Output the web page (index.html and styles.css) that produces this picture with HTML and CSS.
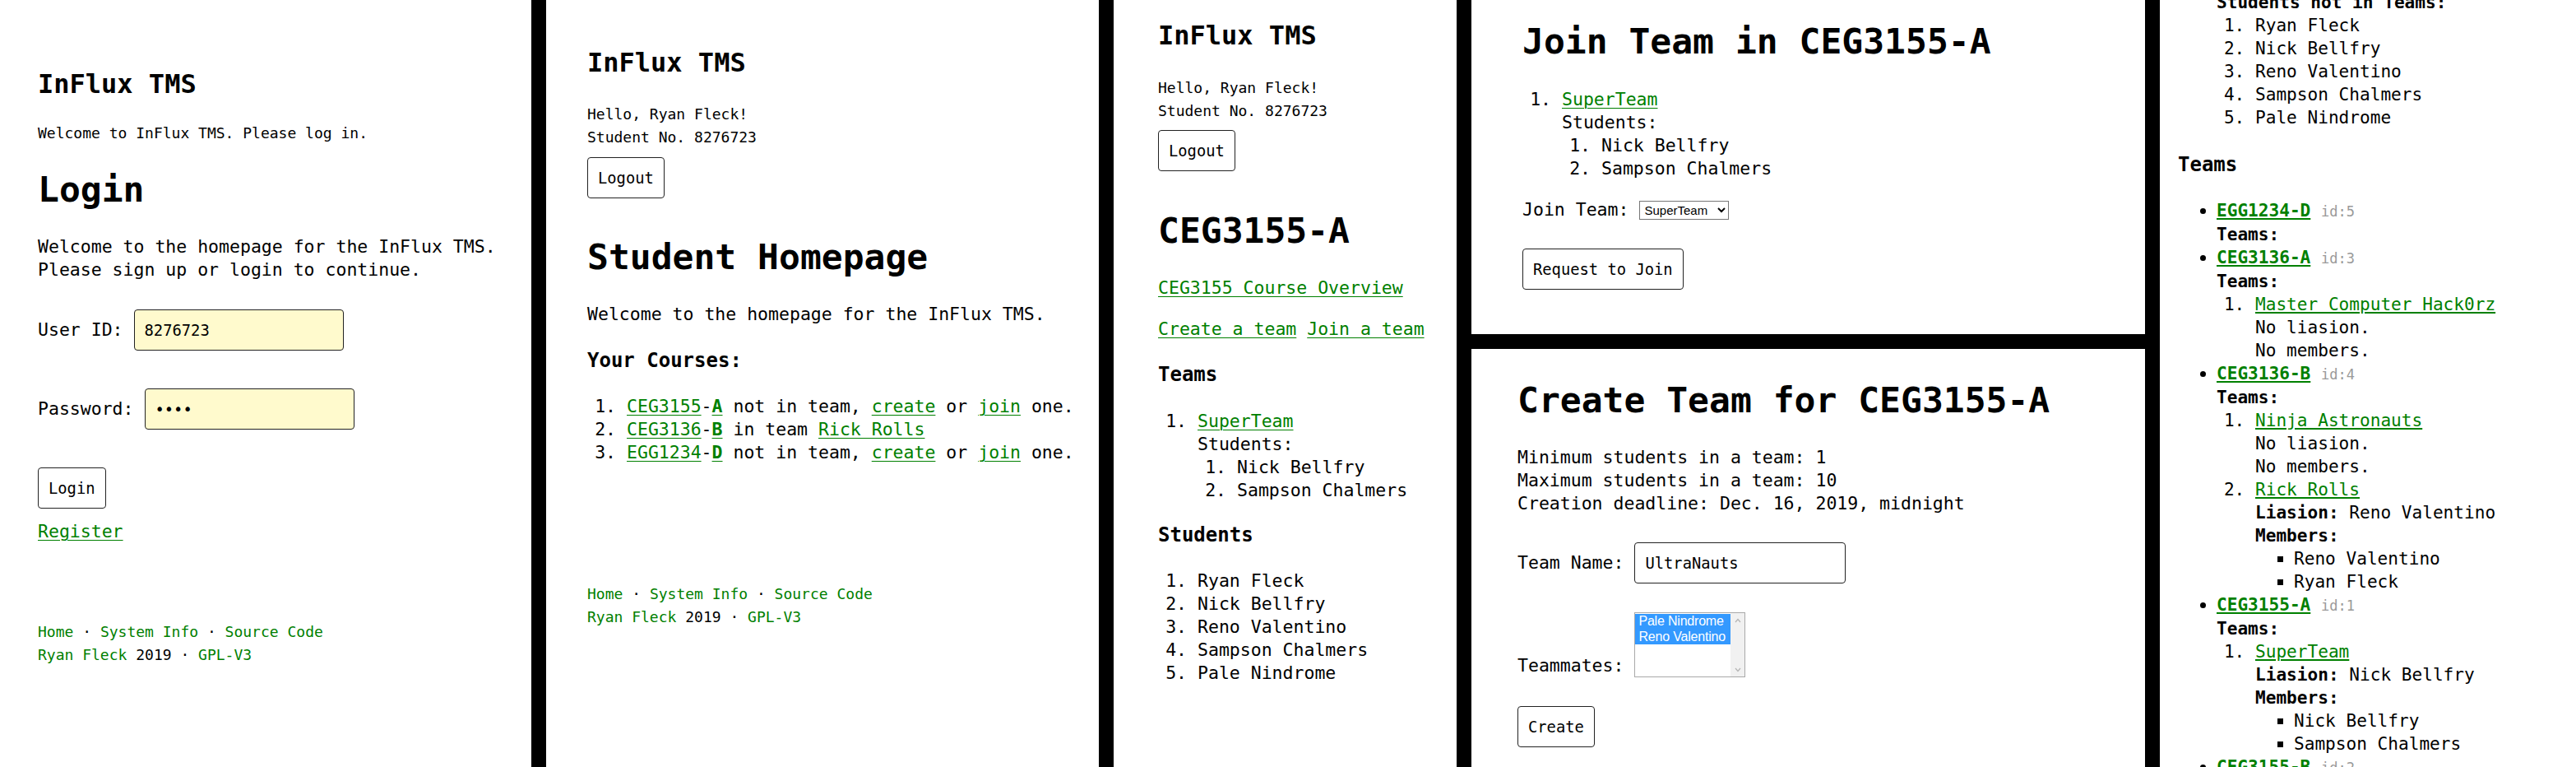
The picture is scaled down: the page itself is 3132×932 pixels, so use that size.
FILE: index.html
```html
<!DOCTYPE html>
<html lang="en">
<head>
<meta charset="utf-8">
<title>InFlux TMS</title>
<link rel="stylesheet" href="styles.css">
</head>
<body>
<main class="strip">

  <section class="panel panel-login">
    <h1 class="brand">InFlux TMS</h1>
    <p class="small tagline">Welcome to InFlux TMS. Please log in.</p>
    <h2 class="title login-title">Login</h2>
    <p class="text intro">Welcome to the homepage for the InFlux TMS.<br>Please sign up or login to continue.</p>
    <form class="login-form">
      <div class="field field-id"><label class="text">User ID:</label><input class="input input-yellow" type="text" value="8276723"></div>
      <div class="field field-pw"><label class="text">Password:</label><input class="input input-yellow" type="password" value="abcd"></div>
      <button class="btn login-btn" type="button">Login</button>
    </form>
    <p class="text register"><a href="#">Register</a></p>
    <footer class="small foot foot-login">
      <div><a href="#">Home</a> · <a href="#">System Info</a> · <a href="#">Source Code</a></div>
      <div><a href="#">Ryan Fleck</a> 2019 · <a href="#">GPL-V3</a></div>
    </footer>
  </section>

  <section class="panel panel-home">
    <h1 class="brand">InFlux TMS</h1>
    <p class="small greeting">Hello, Ryan Fleck!<br>Student No. 8276723</p>
    <button class="btn logout" type="button">Logout</button>
    <h2 class="title home-title">Student Homepage</h2>
    <p class="text home-welcome">Welcome to the homepage for the InFlux TMS.</p>
    <h3 class="subhead home-courses">Your Courses:</h3>
    <ol class="text list home-list">
      <li><a href="#">CEG3155</a>-<a href="#"><b>A</b></a> not in team, <a href="#">create</a> or <a href="#">join</a> one.</li>
      <li><a href="#">CEG3136</a>-<a href="#"><b>B</b></a> in team <a href="#">Rick Rolls</a></li>
      <li><a href="#">EGG1234</a>-<a href="#"><b>D</b></a> not in team, <a href="#">create</a> or <a href="#">join</a> one.</li>
    </ol>
    <footer class="small foot foot-home">
      <div><a href="#">Home</a> · <a href="#">System Info</a> · <a href="#">Source Code</a></div>
      <div><a href="#">Ryan Fleck</a> 2019 · <a href="#">GPL-V3</a></div>
    </footer>
  </section>

  <section class="panel panel-course">
    <h1 class="brand">InFlux TMS</h1>
    <p class="small greeting course-greeting">Hello, Ryan Fleck!<br>Student No. 8276723</p>
    <button class="btn logout course-logout" type="button">Logout</button>
    <h2 class="title course-title">CEG3155-A</h2>
    <p class="text course-overview"><a href="#">CEG3155 Course Overview</a></p>
    <p class="text course-actions"><a href="#">Create a team</a> <a href="#">Join a team</a></p>
    <h3 class="subhead course-teams">Teams</h3>
    <ol class="text list course-team-list">
      <li><a href="#">SuperTeam</a><br>Students:
        <ol class="list">
          <li>Nick Bellfry</li>
          <li>Sampson Chalmers</li>
        </ol>
      </li>
    </ol>
    <h3 class="subhead course-students">Students</h3>
    <ol class="text list course-student-list">
      <li>Ryan Fleck</li>
      <li>Nick Bellfry</li>
      <li>Reno Valentino</li>
      <li>Sampson Chalmers</li>
      <li>Pale Nindrome</li>
    </ol>
  </section>

  <div class="stack">
    <section class="panel panel-join">
      <h2 class="title">Join Team in CEG3155-A</h2>
      <ol class="text list join-list">
        <li><a href="#">SuperTeam</a><br>Students:
          <ol class="list">
            <li>Nick Bellfry</li>
            <li>Sampson Chalmers</li>
          </ol>
        </li>
      </ol>
      <div class="field field-join"><label class="text">Join Team:</label>
        <select class="select"><option>SuperTeam</option></select>
      </div>
      <button class="btn join-btn" type="button">Request to Join</button>
    </section>

    <section class="panel panel-create">
      <h2 class="title">Create Team for CEG3155-A</h2>
      <p class="text create-info">Minimum students in a team: 1<br>Maximum students in a team: 10<br>Creation deadline: Dec. 16, 2019, midnight</p>
      <div class="field field-name"><label class="text">Team Name:</label><input class="input" type="text" value="UltraNauts"></div>
      <div class="field field-mates"><label class="text">Teammates:</label>
        <div class="listbox" role="listbox" aria-multiselectable="true">
          <div class="listbox-options">
            <div class="option selected" role="option" aria-selected="true">Pale Nindrome</div>
            <div class="option selected" role="option" aria-selected="true">Reno Valentino</div>
          </div>
          <div class="scrollbar">
            <svg width="8" height="6" viewBox="0 0 8 6"><path d="M1 5 L4 1.5 L7 5" fill="none" stroke="#b5b5b5" stroke-width="1.2"/></svg>
            <svg width="8" height="6" viewBox="0 0 8 6"><path d="M1 1 L4 4.5 L7 1" fill="none" stroke="#b5b5b5" stroke-width="1.2"/></svg>
          </div>
        </div>
      </div>
      <button class="btn create-btn" type="button">Create</button>
    </section>
  </div>

  <section class="panel panel-admin">
    <div class="admin">
      <div class="admin-section">
        <strong>Students not in Teams:</strong>
        <ol class="admin-ol">
          <li>Ryan Fleck</li>
          <li>Nick Bellfry</li>
          <li>Reno Valentino</li>
          <li>Sampson Chalmers</li>
          <li>Pale Nindrome</li>
        </ol>
      </div>
      <h3 class="subhead admin-teams">Teams</h3>
      <ul class="admin-courses">
        <li><a class="course" href="#">EGG1234-D</a> <span class="cid">id:5</span>
          <div><strong>Teams:</strong></div>
        </li>
        <li><a class="course" href="#">CEG3136-A</a> <span class="cid">id:3</span>
          <div><strong>Teams:</strong></div>
          <ol class="admin-ol">
            <li><a href="#">Master Computer Hack0rz</a>
              <div>No liasion.</div>
              <div>No members.</div>
            </li>
          </ol>
        </li>
        <li><a class="course" href="#">CEG3136-B</a> <span class="cid">id:4</span>
          <div><strong>Teams:</strong></div>
          <ol class="admin-ol">
            <li><a href="#">Ninja Astronauts</a>
              <div>No liasion.</div>
              <div>No members.</div>
            </li>
            <li><a href="#">Rick Rolls</a>
              <div><strong>Liasion:</strong> Reno Valentino</div>
              <div><strong>Members:</strong></div>
              <ul class="admin-members">
                <li>Reno Valentino</li>
                <li>Ryan Fleck</li>
              </ul>
            </li>
          </ol>
        </li>
        <li><a class="course" href="#">CEG3155-A</a> <span class="cid">id:1</span>
          <div><strong>Teams:</strong></div>
          <ol class="admin-ol">
            <li><a href="#">SuperTeam</a>
              <div><strong>Liasion:</strong> Nick Bellfry</div>
              <div><strong>Members:</strong></div>
              <ul class="admin-members">
                <li>Nick Bellfry</li>
                <li>Sampson Chalmers</li>
              </ul>
            </li>
          </ol>
        </li>
        <li><a class="course" href="#">CEG3155-B</a> <span class="cid">id:2</span>
          <div><strong>Teams:</strong></div>
        </li>
      </ul>
    </div>
  </section>

</main>
</body>
</html>
```

FILE: styles.css
```css
* { box-sizing: border-box; }
html, body { margin: 0; padding: 0; }
body {
  background: #000;
  color: #000;
  font-family: "DejaVu Sans Mono", "Liberation Mono", monospace;
}
.strip {
  display: flex;
  gap: 18px;
  width: 3132px;
  height: 932px;
  overflow: hidden;
}
.panel { background: #fff; flex: none; overflow: hidden; }
.panel-login { width: 646px; padding: 82px 0 0 46px; }
.panel-home { width: 672px; padding: 56px 0 0 50px; }
.panel-course { width: 417px; padding: 23px 0 0 54px; }
.stack { width: 819px; flex: none; display: flex; flex-direction: column; gap: 18px; }
.panel-join { height: 406px; padding: 24px 0 0 62px; }
.panel-create { flex: 1; padding: 36px 0 0 56px; }
.panel-admin { width: 506px; padding: 0 0 0 22px; }

p, h1, h2, h3, ol, ul, form { margin: 0; }

a { color: #008000; text-decoration-thickness: 1px; text-underline-offset: 3px; }

.brand { font-size: 32px; line-height: 40px; font-weight: 700; }
.small { font-size: 18px; line-height: 28px; }
.text { font-size: 21.5px; line-height: 28px; }
.title { font-size: 43px; line-height: 52px; font-weight: 700; }
.subhead { font-size: 24px; line-height: 32px; font-weight: 700; }
.list { padding-left: 48px; }
.list .list { padding-left: 48px; }

.foot a { text-decoration: none; }

.field { display: flex; align-items: center; gap: 13px; }
.input {
  width: 255px;
  height: 50px;
  border: 1px solid #222;
  border-radius: 4px;
  padding: 0 0 0 12px;
  background: #fff;
  color: #000;
  font: 18.8px "DejaVu Sans Mono", monospace;
}
.input-yellow { background: #fffacd; }
.btn {
  display: block;
  height: 50px;
  padding: 0 12px;
  border: 1px solid #222;
  border-radius: 4px;
  background: #fff;
  color: #000;
  font: 18.8px "DejaVu Sans Mono", monospace;
}

/* login panel */
.tagline { margin-top: 26px; }
.login-title { margin-top: 28px; }
.intro { margin-top: 30px; }
.field-id { margin-top: 34px; }
.field-pw { margin-top: 46px; }
.login-btn { margin-top: 46px; }
.register { margin-top: 14px; }
.foot-login { margin-top: 94px; }

/* home panel */
.greeting { margin-top: 29px; }
.logout { margin-top: 10px; }
.home-title { margin-top: 45px; }
.home-welcome { margin-top: 30px; }
.home-courses { margin-top: 26px; }
.home-list { margin-top: 26px; }
.foot-home { margin-top: 144px; }

/* course panel */
.course-greeting { margin-top: 30px; }
.course-logout { margin-top: 9px; }
.course-title { margin-top: 46px; }
.course-overview { margin-top: 30px; }
.course-actions { margin-top: 22px; }
.course-teams { margin-top: 25px; }
.course-team-list { margin-top: 27px; }
.course-students { margin-top: 24px; }
.course-student-list { margin-top: 26px; }

/* join panel */
.join-list { margin-top: 31px; }
.field-join { margin-top: 22px; }
.select {
  width: 109px;
  height: 23px;
  padding: 0 0 0 1px;
  border: 1px solid #767676;
  border-radius: 0;
  background: #fff;
  color: #000;
  font: 15px "Liberation Sans", Arial, sans-serif;
}
.join-btn { margin-top: 33px; }

/* create panel */
.create-info { margin-top: 30px; }
.field-name { margin-top: 33px; }
.field-name .input { width: 257px; }
.field-mates { margin-top: 35px; align-items: flex-end; }
.listbox {
  width: 135px;
  height: 79px;
  border: 1px solid #a9a9a9;
  background: #fff;
  display: flex;
}
.listbox-options { flex: 1; padding-top: 1px; }
.option {
  height: 18.5px;
  line-height: 18.5px;
  padding-left: 4px;
  font: 16px "Liberation Sans", Arial, sans-serif;
  letter-spacing: -0.2px;
  white-space: nowrap;
  overflow: hidden;
}
.option.selected { background: #3399ff; color: #fff; }
.scrollbar {
  width: 17px;
  background: #f1f1f1;
  display: flex;
  flex-direction: column;
  justify-content: space-between;
  align-items: center;
  padding: 6px 0 5px;
}
.scrollbar svg { display: block; }
.create-btn { margin-top: 35px; }

/* admin panel */
.admin { font-size: 21.1px; line-height: 28px; margin-top: -11px; }
.admin a { text-decoration-thickness: 2px; text-underline-offset: 2px; }
.admin-section { padding-left: 47px; }
.admin-ol { padding-left: 47px; }
.admin-teams { margin-top: 27px; }
.admin-courses { margin-top: 26px; padding-left: 47px; list-style: disc; }
.admin-members { padding-left: 47px; list-style: square; }
.course { font-weight: 700; }
.cid { color: #9a9a9a; font-size: 17px; }
```
